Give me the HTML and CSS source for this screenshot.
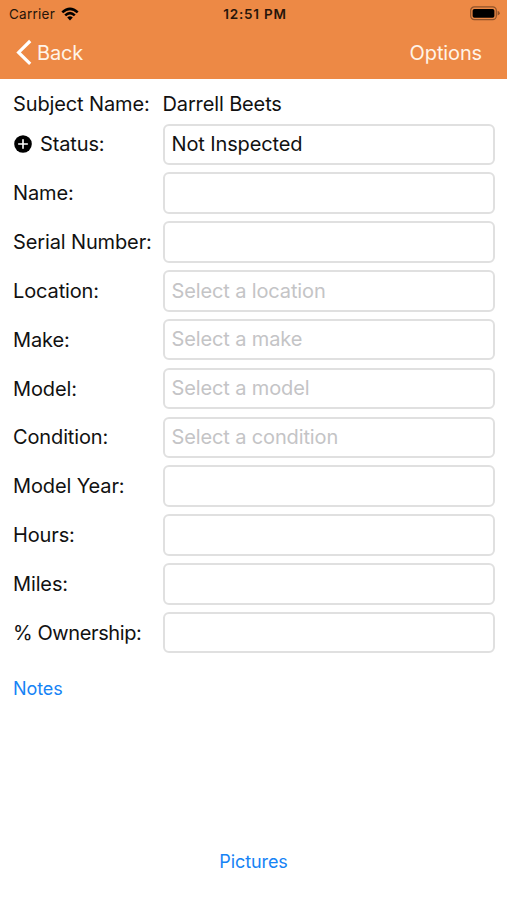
FILE: index.html
```html
<!DOCTYPE html>
<html lang="en">
<head>
<meta charset="utf-8">
<title>Equipment</title>
<link rel="stylesheet" href="styles.css">
</head>
<body>
<header class="header">
  <div class="status-bar">
    <div class="carrier"><span>Carrier</span>
      <svg class="wifi" width="18" height="14" viewBox="0 0 18 14"><path d="M0.4 4.4Q9 -3.6 17.6 4.4L15.8 6.3Q9 0.3 2.2 6.3Z"/><path d="M3.3 7.4Q9 2.3 14.7 7.4L12.9 9.3Q9 5.9 5.1 9.3Z"/><path d="M6.2 10.4Q9 8.2 11.8 10.4L9 13.6Z"/></svg>
    </div>
    <div class="clock">12:51 PM</div>
    <svg class="battery" width="31" height="15" viewBox="0 0 31 15"><rect class="shell" x=".7" y=".9" width="25.6" height="12.7" rx="3.6"/><rect x="2.6" y="2.9" width="21.8" height="8.8" rx="1.8"/><path class="tip" d="M27.6 4.8Q29.8 5.7 29.8 7.2T27.6 9.6Z"/></svg>
  </div>
  <nav class="nav">
    <a class="back"><svg width="17" height="27" viewBox="0 0 17 27"><path d="M14.2 2L2.6 13.4L14.2 24.8"/></svg><span>Back</span></a>
    <a class="options">Options</a>
  </nav>
</header>
<main class="form">
  <div class="row subject"><div class="label">Subject Name:</div><div class="value">Darrell Beets</div></div>
  <div class="row"><div class="label with-icon"><svg width="18" height="18" viewBox="0 0 18 18"><circle cx="9" cy="9" r="8.8"/><path d="M9 4.7V13.3M4.7 9H13.3"/></svg><span>Status:</span></div><div class="field filled">Not Inspected</div></div>
  <div class="row"><div class="label">Name:</div><div class="field"></div></div>
  <div class="row"><div class="label">Serial Number:</div><div class="field"></div></div>
  <div class="row"><div class="label">Location:</div><div class="field">Select a location</div></div>
  <div class="row"><div class="label">Make:</div><div class="field">Select a make</div></div>
  <div class="row"><div class="label">Model:</div><div class="field">Select a model</div></div>
  <div class="row"><div class="label">Condition:</div><div class="field">Select a condition</div></div>
  <div class="row"><div class="label">Model Year:</div><div class="field"></div></div>
  <div class="row"><div class="label">Hours:</div><div class="field"></div></div>
  <div class="row"><div class="label">Miles:</div><div class="field"></div></div>
  <div class="row"><div class="label ownership">% Ownership:</div><div class="field"></div></div>
</main>
<a class="link notes">Notes</a>
<a class="link pictures">Pictures</a>
</body>
</html>
```

FILE: styles.css
```css
* { box-sizing: border-box; }
body {
  margin: 0;
  height: 900px;
  display: flex;
  flex-direction: column;
  background: #fff;
  color: #111;
  font: 20px/24px Inter, "Liberation Sans", sans-serif;
  letter-spacing: -0.13px;
  overflow: hidden;
}
.header { height: 79px; background: #ed8945; flex: none; }
.status-bar {
  display: grid;
  grid-template-columns: 1fr auto 1fr;
  align-items: center;
  height: 27px;
  padding: 0 6px 0 9px;
  font-size: 13.5px;
  color: #26150a;
}
.carrier { display: flex; align-items: center; gap: 6px; letter-spacing: 0.25px; }
.clock { font-weight: 600; letter-spacing: 0.8px; }
.wifi { fill: #000; }
.battery { justify-self: end; fill: #000; }
.battery .shell { fill: none; stroke: #8e522a; stroke-width: 1.2; }
.battery .tip { fill: #8e522a; }
.nav {
  display: flex;
  justify-content: space-between;
  align-items: center;
  height: 51px;
  padding: 0 25px 0 16px;
  color: #fff4e8;
}
.back { display: flex; align-items: center; gap: 4px; }
.back svg { fill: none; stroke: #fff; stroke-width: 3.2; }
.form { padding: 8px 12px 0 13px; }
.row { display: flex; align-items: center; height: 48.84px; }
.row.subject { height: 33px; }
.label { width: 149.5px; flex: none; white-space: nowrap; }
.ownership { letter-spacing: -0.4px; }
.with-icon { display: flex; align-items: center; gap: 8px; padding-left: 1px; }
.with-icon svg { fill: #000; }
.with-icon path { stroke: #fff; stroke-width: 1.6; stroke-linecap: round; }
.field {
  flex: 1;
  height: 41.5px;
  border: 2px solid #e0e0e0;
  border-radius: 6px;
  padding: 6.5px 7px;
  color: #c4c4c6;
}
.field.filled { color: #111; }
.link { color: #1683f5; font-size: 18px; letter-spacing: -0.1px; }
.notes { margin: 20px 0 0 13px; }
.pictures { margin: auto 0 26px; text-align: center; }
```
